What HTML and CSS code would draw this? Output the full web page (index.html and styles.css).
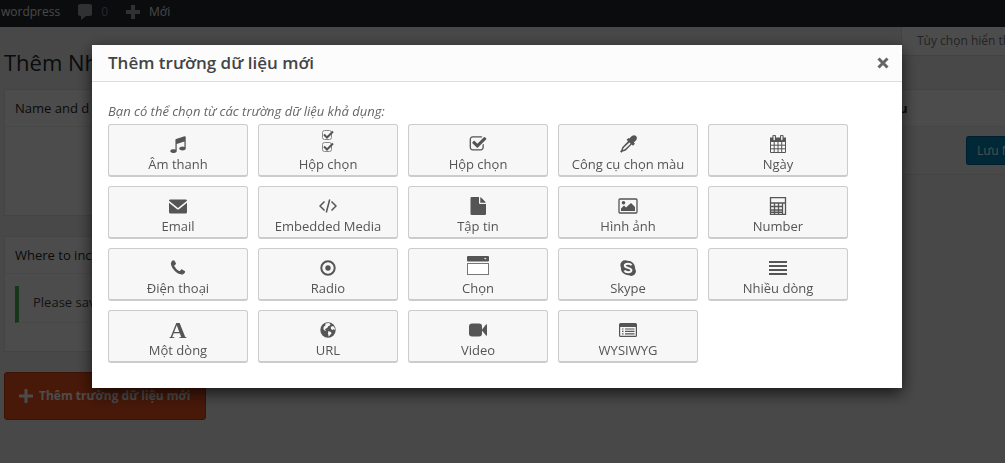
FILE: index.html
```html
<!DOCTYPE html>
<html lang="vi">
<head>
<meta charset="utf-8">
<title>Thêm trường dữ liệu mới</title>
<link rel="stylesheet" href="styles.css">
</head>
<body>
<div class="admin">
  <nav class="adminbar">
    <a class="bar-item" href="#">wordpress</a>
    <a class="bar-item" href="#"><svg class="bar-icon" viewBox="0 0 16 16"><path d="M3 0h10q2 0 2 2v8q0 2-2 2h-4l-5 4v-4h-1q-2 0-2-2V2q0-2 2-2z"/></svg><span class="bar-count">0</span></a>
    <a class="bar-item" href="#"><svg class="bar-icon" viewBox="0 0 16 16"><path d="M6 1h4v5h5v4h-5v5H6v-5H1V6h5z"/></svg><span>Mới</span></a>
  </nav>
  <div class="screen-row">
    <h1 class="page-title">Thêm Nh</h1>
    <button class="screen-options" type="button">Tùy chọn hiển thị</button>
  </div>
  <div class="columns">
    <main class="main">
      <section class="box">
        <h2 class="box-title">Name and d</h2>
        <div class="box-body box-fields"></div>
      </section>
      <section class="box">
        <h2 class="box-title">Where to inc</h2>
        <div class="box-body box-notice"><p class="notice">Please save</p></div>
      </section>
      <button class="add-field" type="button"><svg class="add-icon" viewBox="0 0 14 14"><path d="M5.500 0h3v5.500H14v3H8.500V14h-3V8.500H0v-3h5.500z"/></svg><span>Thêm trường dữ liệu mới</span></button>
    </main>
    <aside class="box side">
      <h2 class="box-title side-title">dữ liệu</h2>
      <div class="side-actions"><button class="save" type="button">Lưu Nhóm</button></div>
    </aside>
  </div>
</div>

<div class="overlay">
  <div class="modal" role="dialog" aria-labelledby="modal-title">
    <header class="modal-header">
      <h2 class="modal-title" id="modal-title">Thêm trường dữ liệu mới</h2>
      <button class="close" type="button" aria-label="Đóng"><svg class="close-icon" viewBox="0 0 12 12"><path d="M1.500 1.500l9 9M10.500 1.500l-9 9"/></svg></button>
    </header>
    <div class="modal-body">
      <p class="hint">Bạn có thể chọn từ các trường dữ liệu khả dụng:</p>
      <div class="fields">
        <button class="field" type="button"><svg class="icon" viewBox="0 0 1792 1792"><path d="M1664 224v1120q0 50-34 89t-86 60.500-103.500 32-96.500 10.500-96.500-10.500-103.500-32-86-60.500-34-89 34-89 86-60.500 103.500-32 96.500-10.500q105 0 192 39v-537l-768 237v709q0 50-34 89t-86 60.500-103.500 32-96.500 10.500-96.500-10.500-103.500-32-86-60.500-34-89 34-89 86-60.500 103.500-32 96.500-10.500q105 0 192 39v-967q0-31 19-56.500t49-35.500l832-256q12-4 28-4 40 0 68 28t28 68z"/></svg><span>Âm thanh</span></button>
        <button class="field" type="button"><svg class="icon icon-tall" viewBox="0 0 14 24"><g fill="none" stroke="#888"><rect x="1.500" y="1.500" width="9" height="9" rx="2"/><rect x="1.500" y="13.500" width="9" height="9" rx="2"/></g><path d="M3 5.500l3 3L12 2.500M3 17.500l3 3 6-6" fill="none" stroke="#555" stroke-width="2"/></svg><span>Hộp chọn</span></button>
        <button class="field" type="button"><svg class="icon" viewBox="0 0 1792 1792"><path d="M1472 930v318q0 119-84.500 203.500t-203.500 84.500h-832q-119 0-203.500-84.500t-84.500-203.500v-832q0-119 84.500-203.500t203.500-84.500h832q63 0 117 25 15 7 18 23 3 17-9 29l-49 49q-10 10-23 10-3 0-9-2-23-6-45-6h-832q-66 0-113 47t-47 113v832q0 66 47 113t113 47h832q66 0 113-47t47-113v-254q0-13 9-22l64-64q10-10 23-10 6 0 12 3 20 8 20 29zm231-489l-814 814q-24 24-57 24t-57-24l-430-430q-24-24-24-57t24-57l110-110q24-24 57-24t57 24l263 263 647-647q24-24 57-24t57 24l110 110q24 24 24 57t-24 57z"/></svg><span>Hộp chọn</span></button>
        <button class="field" type="button"><svg class="icon" viewBox="0 0 18 18"><path fill-rule="evenodd" d="M11.500 2.300c1.700-2.200 4-2.700 5.500-1.300 1.500 1.500 1.100 3.900-1.100 5.600l-1.100.9 1.100 1.300-1.900 1.900-1.300-1.200-6.200 6.200-2.700.9-1.500 1.200-1.200-1.200 1.200-1.600.9-2.700L9 6.300 7.600 4.800l1.900-1.900 1 .7zM4.500 13l-.7 2 2-.7L11.600 8.700 10.300 7.400z"/></svg><span>Công cụ chọn màu</span></button>
        <button class="field" type="button"><svg class="icon" viewBox="0 0 18 18"><path d="M1 2.500h16V7H1z"/><path d="M1.500 6.500h15v11h-15zM5.200 7v10.500M9 7v10.500M12.700 7v10.500M1.500 10.200h15M1.500 13.800h15" fill="none" stroke="#555"/><path d="M5.200 1.500v3M12.800 1.500v3" fill="none" stroke="#555" stroke-width="3.600" stroke-linecap="round"/><path d="M5.200 1.500v3M12.800 1.500v3" fill="none" stroke="#f7f7f7" stroke-width="1.400" stroke-linecap="round"/></svg><span>Ngày</span></button>

        <button class="field" type="button"><svg class="icon" viewBox="0 0 18 18"><path d="M1.500 2.500h15q1.500 0 1.500 1.200L9 11 0 3.700q0-1.200 1.500-1.200zM0 5.700l8 6.500q1 .7 2 0l8-6.500V15q0 1.500-1.500 1.500h-15Q0 16.500 0 15z"/></svg><span>Email</span></button>
        <button class="field" type="button"><svg class="icon" viewBox="0 0 18 18"><path d="M5.500 4.500L1 9l4.500 4.500M12.500 4.500L17 9l-4.500 4.500M10.700 2.500l-3.400 13" fill="none" stroke="#555" stroke-width="1.500"/></svg><span>Embedded Media</span></button>
        <button class="field" type="button"><svg class="icon" viewBox="0 0 18 18"><path d="M2.500 0H10v6q0 1 1 1h6v9.800q0 1.200-1.200 1.200H2.700q-1.200 0-1.200-1.200V1.200Q1.500 0 2.500 0zM11.300.2q.7.200 1.300.8L16 4.400q.6.600.8 1.400h-5.500z"/></svg><span>Tập tin</span></button>
        <button class="field" type="button"><svg class="icon icon-wide" viewBox="0 0 20 18"><rect x="1" y="2" width="18" height="14" rx="1" fill="none" stroke="#555" stroke-width="1.300"/><circle cx="5.500" cy="5.700" r="1.800"/><path d="M3 14v-2.500l3-3 2 2L13 6l4 4v4z"/></svg><span>Hình ảnh</span></button>
        <button class="field" type="button"><svg class="icon" viewBox="0 0 18 18"><path d="M1.500.5h15v17h-15zM1.500 6h15M1.500 9.500h12M1.500 13h12M5.500 6v11.500M9.500 6v11.500M13.500 6v11.500" fill="none" stroke="#555" stroke-width="1.300"/><path d="M1 14.500h12.500V16H1z"/></svg><span>Number</span></button>

        <button class="field" type="button"><svg class="icon" viewBox="0 0 1792 1792"><path d="M1600 1240q0 27-10 70.500t-21 68.500q-21 50-122 106-94 51-186 51-27 0-52.500-3.500t-57.500-12.500-47.500-14.500-55.500-20.500-49-18q-98-35-175-83-128-79-264.500-215.500t-215.500-264.500q-48-77-83-175-3-9-18-49t-20.500-55.500-14.500-47.500-12.500-57.500-3.500-52.500q0-92 51-186 56-101 106-122 25-11 68.500-21t70.500-10q14 0 21 3 18 6 53 76 11 19 30 54t35 63.500 31 53.500q3 4 17.500 25t21.500 35.500 7 28.500q0 20-28.500 50t-62 55-62 53-28.500 46q0 9 5 22.500t8.500 20.500 14 24 11.500 19q76 137 174 235t235 174q2 1 19 11.500t24 14 20.500 8.500 22.500 5q18 0 46-28.500t53-62 55-62 50-28.500q14 0 28.500 7t35.500 21.500 25 17.500q25 15 53.500 31t63.500 35 54 30q70 35 76 53 3 7 3 21z"/></svg><span>Điện thoại</span></button>
        <button class="field" type="button"><svg class="icon" viewBox="0 0 18 18"><circle cx="9" cy="9" r="6.700" fill="none" stroke="#555" stroke-width="2"/><circle cx="9" cy="9" r="2.700"/></svg><span>Radio</span></button>
        <button class="field" type="button"><svg class="icon icon-select" viewBox="0 0 24 20"><rect x="1" y="0" width="22" height="5.500" rx="1"/><path d="M18 2h2.500l-1.200 1.600z" fill="#f7f7f7"/><rect x="1.500" y="7.500" width="21" height="11" fill="#fff" stroke="#777"/></svg><span>Chọn</span></button>
        <button class="field" type="button"><svg class="icon" viewBox="0 0 18 18"><circle cx="6" cy="6" r="4.700"/><circle cx="12.200" cy="12.200" r="4.700"/><circle cx="9" cy="9" r="7.200"/><path d="M12.500 6.200C11.500 4.300 6 4 5.800 6.600 5.600 9.300 12.600 8.500 12.400 11.200 12.200 14 6.500 13.800 5.500 11.500" fill="none" stroke="#f7f7f7" stroke-width="2"/></svg><span>Skype</span></button>
        <button class="field" type="button"><svg class="icon" viewBox="0 0 18 18"><path d="M0 2h18v2H0zm0 4h18v2H0zm0 4h18v2H0zm0 4h18v2H0z"/></svg><span>Nhiều dòng</span></button>

        <button class="field" type="button"><span class="icon icon-letter" aria-hidden="true">A</span><span>Một dòng</span></button>
        <button class="field" type="button"><svg class="icon" viewBox="0 0 18 18"><circle cx="9" cy="9" r="7.700"/><path d="M8 2.300l2 .1 1.300 1.200-1.500 1.700-1.600.8-.4 1.500-1.500.5-.6 1.200 1.800.3 1.600 1.200-.4 1.600-1.100.8-.3 2-1.400-.9-.5-2.400-1.500-1.600" fill="none"/><path d="M6.500 2.500l3.200-.6 1.800 1.200-.6 1.500-1.700.6-.8 1.600-1.700.9-.8 1.300 1.400.8-1 .3-1.900-1.800.2-2.300L6.300 4.600z M11.800 5.800l2.400-.8 1.500 1.900.3 2-1.300-.6-1.200.8-1.500-1z M9 10.300l2.600.4 1 1.500-1.500 1.800-1.400 1.500-.6-2.400z" fill="#f7f7f7"/></svg><span>URL</span></button>
        <button class="field" type="button"><svg class="icon" viewBox="0 0 18 18"><rect x="0" y="2.500" width="13" height="13" rx="3"/><path d="M13 8.500L17 3.500q1-.6 1 .5v10q0 1-1 .5l-4-5z"/></svg><span>Video</span></button>
        <button class="field" type="button"><svg class="icon" viewBox="0 0 18 18"><path fill-rule="evenodd" d="M1.500 2h15Q18 2 18 3.500v11q0 1.500-1.500 1.500h-15Q0 16 0 14.500v-11Q0 2 1.500 2zM1.200 6v8.800h15.600V6z"/><path d="M3 7.400h1.500v1.200H3zm3 0h9.500v1.200H6zM3 9.800h1.500V11H3zm3 0h9.500V11H6zm-3 2.400h1.500v1.200H3zm3 0h9.500v1.200H6z"/></svg><span>WYSIWYG</span></button>
      </div>
    </div>
  </div>
</div>
</body>
</html>
```

FILE: styles.css
```css
* { box-sizing: border-box; }

body {
  margin: 0;
  overflow: hidden;
  background: #f1f1f1;
  color: #444;
  font: 13px/18px "Open Sans", "Noto Sans", sans-serif;
}

h1, h2, p { margin: 0; }
button { font: inherit; cursor: pointer; }

.admin { min-height: 100vh; }

.adminbar {
  display: flex;
  align-items: center;
  gap: 17px;
  height: 27px;
  padding: 0 1px 4px;
  background: #23282d;
  font-size: 12px;
}
.bar-item {
  display: flex;
  align-items: center;
  gap: 8px;
  color: #eee;
  text-decoration: none;
}
.bar-icon { width: 16px; height: 16px; fill: #a0a5aa; }
.bar-count { color: #82878c; }

.screen-row {
  display: flex;
  justify-content: space-between;
  align-items: flex-start;
  height: 62px;
  padding-left: 4px;
}
.page-title {
  padding-top: 20px;
  color: #23282d;
  font-size: 22px;
  font-weight: 400;
  line-height: 30px;
}
.screen-options {
  width: 104px;
  height: 29px;
  padding: 0 0 0 15px;
  overflow: hidden;
  border: 1px solid #ddd;
  border-width: 0 0 1px 1px;
  background: #fff;
  color: #777;
  font-size: 12px;
  text-align: left;
  white-space: nowrap;
}

.columns {
  display: flex;
  align-items: flex-start;
  gap: 20px;
  padding-left: 4px;
}
.main {
  display: flex;
  flex: 1;
  flex-direction: column;
  align-items: stretch;
  gap: 20px;
}
.box { border: 1px solid #e5e5e5; background: #fff; }
.box-title {
  padding: 9px 10px;
  border-bottom: 1px solid #eee;
  color: #23282d;
  font-size: 13px;
  font-weight: 400;
  line-height: 18px;
}
.box-fields { height: 88px; }
.box-notice { padding: 12px 10px 28px; }
.notice {
  padding: 7px 14px 11px;
  border-left: 4px solid #46b450;
  border-bottom: 1px solid #eee;
}
.add-field {
  display: flex;
  align-items: center;
  align-self: flex-start;
  gap: 6px;
  height: 48px;
  padding: 0 15px 0 14px;
  border: 1px solid #c43c17;
  border-radius: 3px;
  background: #f0531f;
  color: #fff;
  font-size: 12px;
  font-weight: 700;
}
.add-icon { width: 14px; height: 14px; fill: #fff; }

.side { width: 160px; border-right: 0; }
.side-title { padding-left: 16px; font-weight: 700; }
.side-actions {
  display: flex;
  justify-content: flex-end;
  padding: 9px 0;
  background: #f5f5f5;
}
.save {
  width: 39px;
  height: 29px;
  padding: 0 0 0 10px;
  overflow: hidden;
  border: 1px solid #006799;
  border-right: 0;
  border-radius: 3px 0 0 3px;
  background: #0085ba;
  color: #fff;
  font-size: 12px;
  text-align: left;
  white-space: nowrap;
}

.overlay {
  position: fixed;
  inset: 0;
  padding: 45px 103px 45px 92px;
  background: rgba(0, 0, 0, .7);
}
.modal {
  background: #fff;
  box-shadow: 0 5px 15px rgba(0, 0, 0, .7);
}
.modal-header {
  display: flex;
  align-items: center;
  justify-content: space-between;
  height: 37px;
  padding: 0 13px 0 16px;
  border-bottom: 1px solid #ddd;
  background: #fcfcfc;
}
.modal-title {
  color: #444;
  font-size: 17px;
  font-weight: 600;
  line-height: 24px;
}
.close { padding: 0; border: 0; background: none; line-height: 0; }
.close-icon { width: 12px; height: 12px; fill: none; stroke: #666; stroke-width: 3; }

.modal-body { padding: 20px 16px 25px; }
.hint { padding-bottom: 4px; color: #666; font-style: italic; }

.fields {
  display: grid;
  grid-template-columns: repeat(auto-fill, 140px);
  gap: 9px 10px;
}
.field {
  display: flex;
  flex-direction: column;
  align-items: center;
  justify-content: flex-end;
  height: 53px;
  padding: 0 0 2px;
  border: 1px solid #ccc;
  border-bottom-width: 2px;
  border-radius: 3px;
  background: #f7f7f7;
  color: #555;
}
.icon { width: 18px; height: 18px; margin-bottom: 2px; fill: #555; }
.icon-wide { width: 20px; }
.icon-tall { width: 14px; height: 24px; }
.icon-select { width: 24px; height: 20px; margin-bottom: 3px; }
.icon-letter {
  font-family: "Liberation Serif", serif;
  font-size: 24px;
  font-weight: 700;
  line-height: 18px;
}
```
